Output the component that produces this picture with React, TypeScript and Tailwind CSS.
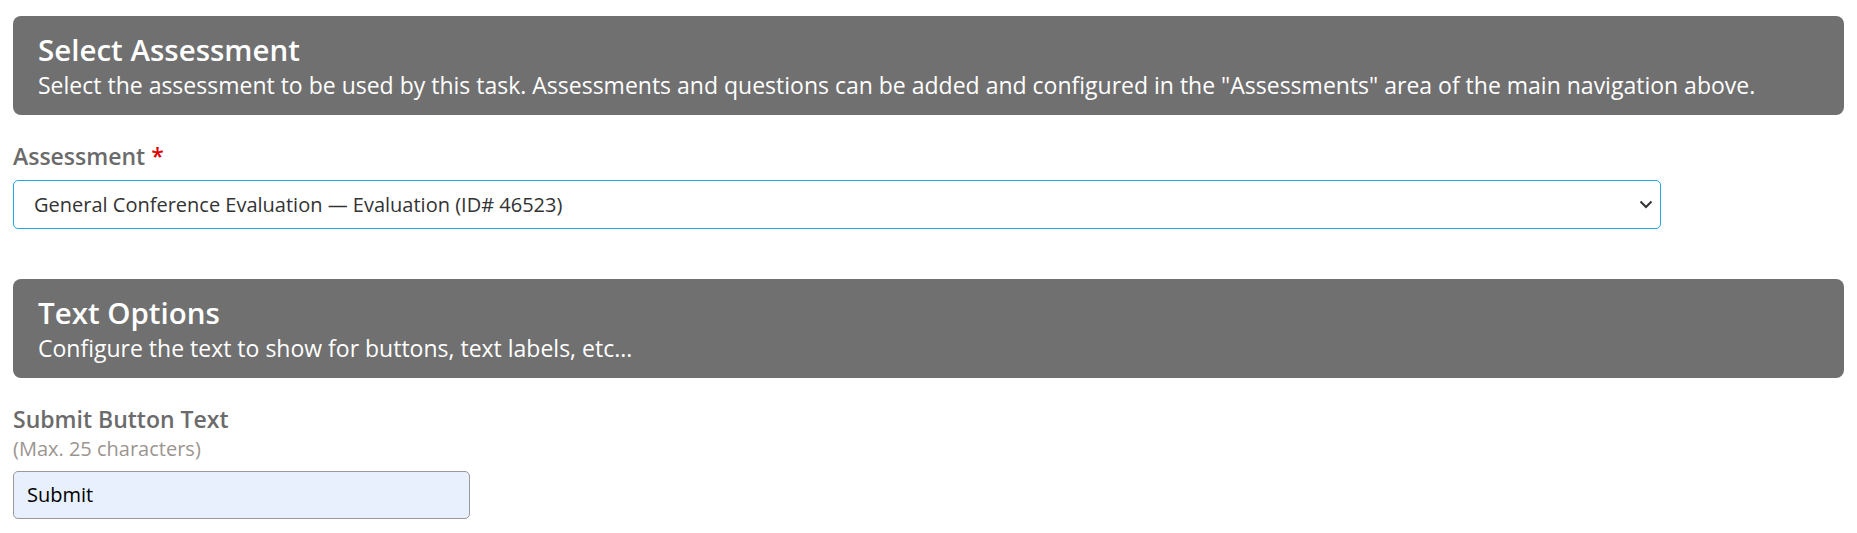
import React from 'react';

const SectionHeader: React.FC<{ title: string; text: string }> = ({ title, text }) => (
  <div className="rounded-lg bg-[#707070] px-[25px] pt-[15px] pb-[13px] text-white">
    <h2 className="text-[29.5px] leading-[37px] font-semibold">{title}</h2>
    <p className="text-[23px] leading-[34px]">{text}</p>
  </div>
);

const App: React.FC = () => {
  return (
    <div className="min-h-screen bg-white px-[13px] pt-4 font-['Open_Sans',sans-serif]">
      {/* Assessment section */}
      <SectionHeader
        title="Select Assessment"
        text={'Select the assessment to be used by this task. Assessments and questions can be added and configured in the "Assessments" area of the main navigation above.'}
      />
      <div className="mt-[26px]">
        <label className="block text-[23px] leading-[30px] font-semibold text-[#6b6b6b]">
          Assessment <span className="text-[#e00000]">*</span>
        </label>
        <div className="mt-[9px] flex h-[49px] w-[1648px] items-center justify-between rounded-[5px] border border-[#22a8e6] bg-white pl-[20px] pr-[7px]">
          <span className="text-[20px] leading-[30px] text-[#333333]">General Conference Evaluation — Evaluation (ID# 46523)</span>
          <svg width="14" height="9" viewBox="0 0 14 9" fill="none" className="text-[#333333]">
            <path d="M1.5 1.5 L7 7 L12.5 1.5" stroke="currentColor" strokeWidth="2" />
          </svg>
        </div>
      </div>

      {/* Text options section */}
      <div className="mt-[50px]">
        <SectionHeader title="Text Options" text="Configure the text to show for buttons, text labels, etc..." />
      </div>
      <div className="mt-[26px]">
        <label className="block text-[23px] leading-[30px] font-semibold text-[#6b6b6b]">Submit Button Text</label>
        <div className="text-[20px] leading-[29px] text-[#9b9590]">(Max. 25 characters)</div>
        <div className="mt-[8px] flex h-[48px] w-[457px] items-center rounded-[5px] border border-[#999999] bg-[#e8f0fe] px-[13px] text-[20px] leading-[30px] text-black">
          Submit
        </div>
      </div>
    </div>
  );
};

export default App;
